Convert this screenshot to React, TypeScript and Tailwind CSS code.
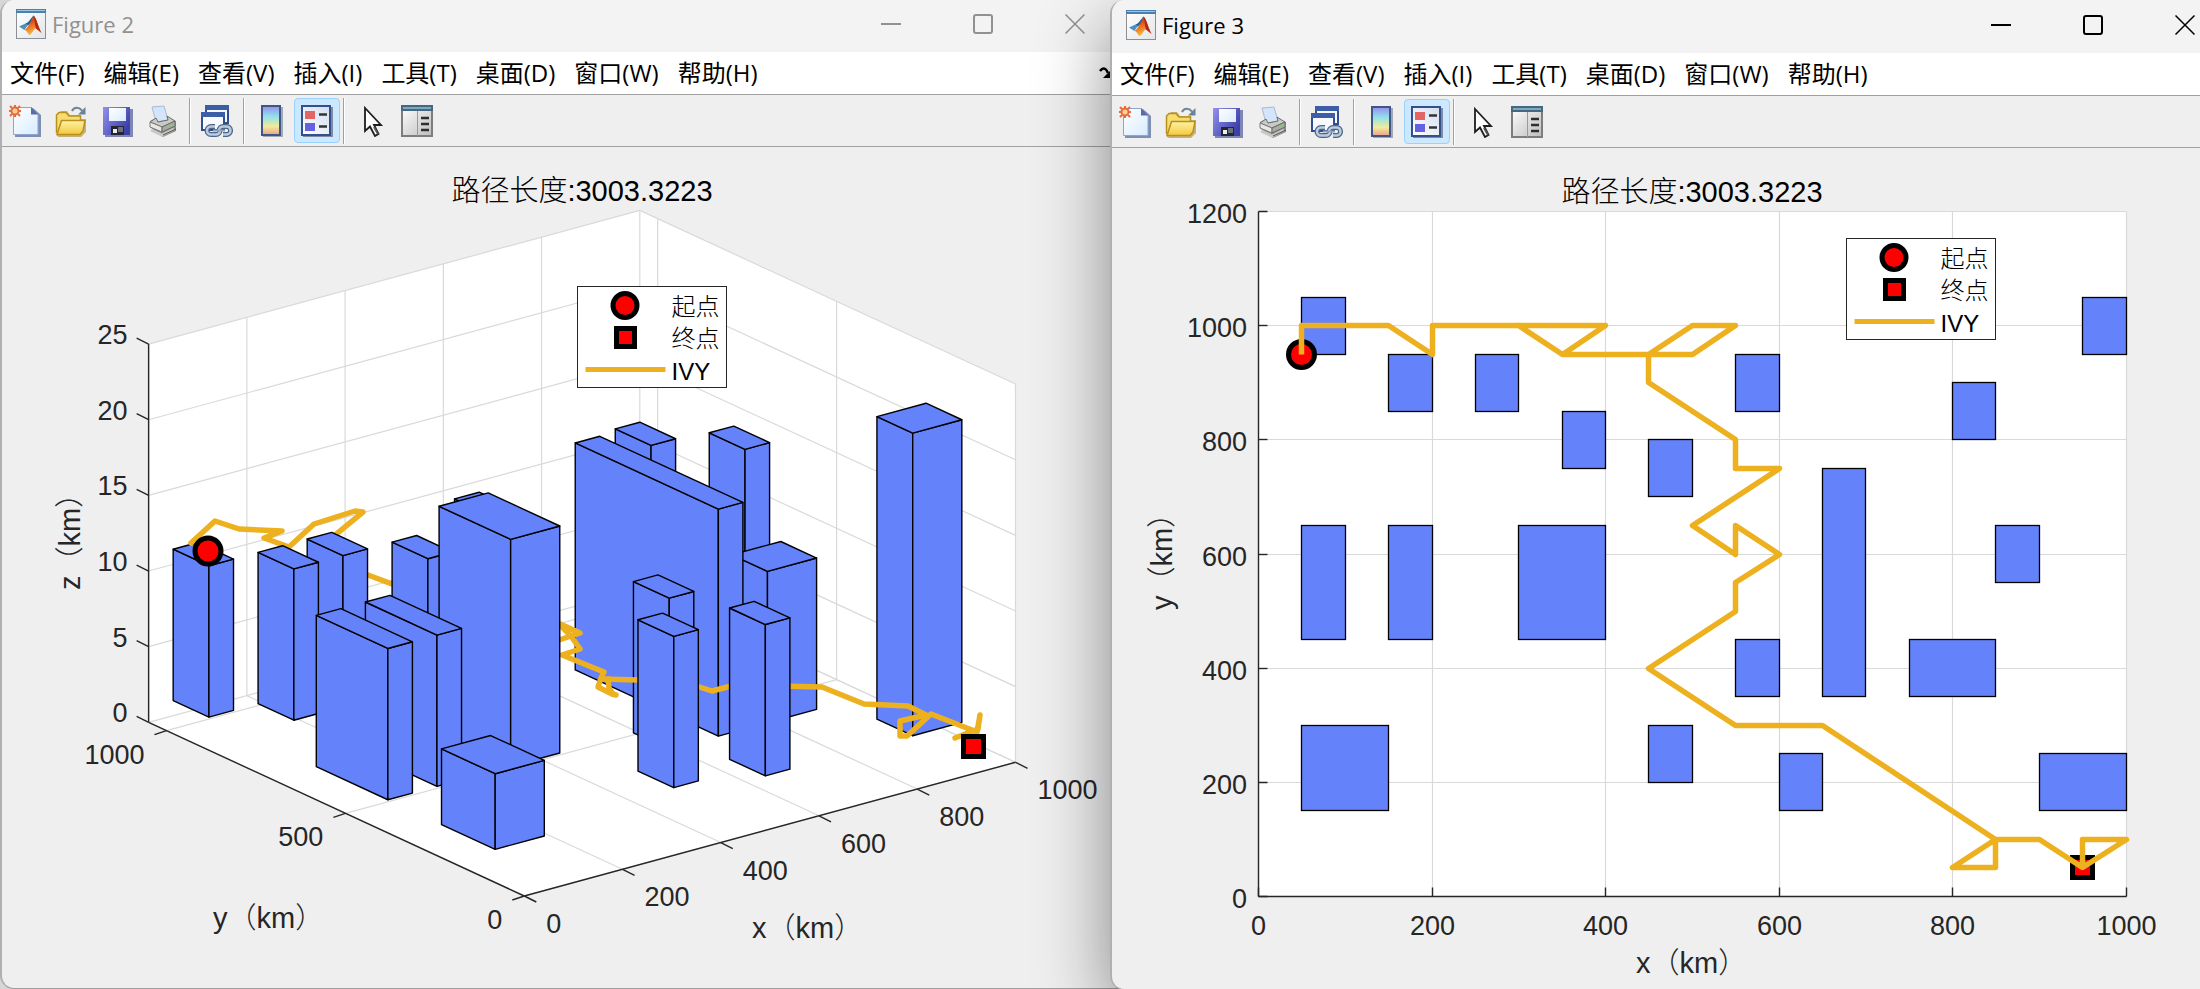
import type { ReactNode } from "react";
import clsx from "clsx";

type Point = [number, number];

interface Building {
  x: number;
  y: number;
  w: number;
  d: number;
  h: number;
}

const MENUS = ["文件(F)", "编辑(E)", "查看(V)", "插入(I)", "工具(T)", "桌面(D)", "窗口(W)", "帮助(H)"];

const BLUE = "#6482fa";
const GOLD = "#edb120";
const INK = "#262626";

// listed back to front, so that nearer blocks paint over farther ones
const FAR_BUILDINGS: Building[] = [
  { x: 950, y: 950, w: 50, d: 100, h: 10 },
  { x: 900, y: 150, w: 100, d: 100, h: 20 },
  { x: 850, y: 550, w: 50, d: 100, h: 15 },
  { x: 800, y: 800, w: 50, d: 100, h: 10 },
  { x: 750, y: 350, w: 100, d: 100, h: 10 },
  { x: 650, y: 350, w: 50, d: 400, h: 15 },
  { x: 550, y: 350, w: 50, d: 100, h: 10 },
  { x: 550, y: 850, w: 50, d: 100, h: 10 },
  { x: 450, y: 700, w: 50, d: 100, h: 10 },
  { x: 50, y: 950, w: 50, d: 100, h: 10 },
];

const NEAR_BUILDINGS: Building[] = [
  { x: 350, y: 750, w: 50, d: 100, h: 10 },
  { x: 250, y: 850, w: 50, d: 100, h: 10 },
  { x: 150, y: 850, w: 50, d: 100, h: 10 },
  { x: 600, y: 150, w: 50, d: 100, h: 10 },
  { x: 450, y: 200, w: 50, d: 100, h: 10 },
  { x: 300, y: 450, w: 100, d: 200, h: 15 },
  { x: 150, y: 450, w: 50, d: 200, h: 10 },
  { x: 50, y: 450, w: 50, d: 200, h: 10 },
  { x: 50, y: 150, w: 100, d: 150, h: 5 },
];

const ROUTE: Point[] = [
  [50, 950], [50, 1000], [150, 1000], [200, 950], [200, 1000], [400, 1000], [350, 950],
  [300, 1000], [350, 950], [450, 950], [500, 1000], [550, 1000], [500, 950], [450, 950],
  [450, 900], [550, 800], [550, 750], [600, 750], [500, 650], [550, 600], [550, 650],
  [600, 600], [550, 550], [550, 500], [450, 400], [550, 300], [650, 300], [850, 100],
  [800, 50], [850, 50], [850, 100], [900, 100], [950, 50], [1000, 100], [950, 100], [950, 50],
];

const ROUTE_3D = [
  "191,543 215,521 239,529 282,531 264,538 289,547 314,524 355,511 363,512 335,535 345,566 368,575 400,587",
  "550,643 580,633 558,623 571,636 580,649 562,655 604,672 601,678 598,687 612,694 616,695",
  "608,679 609,688 613,694",
  "602,679 638,680 665,681",
  "690,684 712,691 735,685",
  "780,686 822,687 864,704 908,706 926,715 900,721 900,736 907,736 931,714 977,732 980,715 978,729 955,738",
];

const line = "stroke-[#262626] stroke-[1.4px]";
const grid = "stroke-[#d9d9d9] stroke-[1.2px]";

const toPoints = (pts: Point[]) => pts.map((p) => p.join(",")).join(" ");

// ---------- icons ----------

function MatlabLogo() {
  return (
    <svg viewBox="0 0 30 30" className="size-[30px] shrink-0" aria-hidden="true">
      <rect x="0.5" y="0.5" width="29" height="29" fill="url(#logoBg)" stroke="#8a8f94" />
      <rect x="0" y="0" width="30" height="4" fill="#4a7fae" />
      <rect x="1" y="1" width="28" height="1" fill="#9fc6e6" />
      <path d="M3 17.5 L9.5 14.5 L12 16 C10 18 9.5 19.5 8.5 21 Z" fill="#4b8fc4" />
      <path d="M9.5 14.5 C13 13.5 15 9 17.5 6.5 L15.5 13 L12 16.5 Z" fill="#2c5f8f" />
      <path d="M17.5 6.5 C15.5 12 12.5 18 8.5 21 C11 21 12 25.5 13.5 26 C16 25.5 18 19 20 19.5 L25.5 24 C22 17 20 8 17.5 6.5 Z" fill="url(#logoFlame)" />
      <path d="M17.5 6.5 C19 11 18.5 16 20 19.5 L25.5 24 C22 17 20 8 17.5 6.5 Z" fill="#b3281b" />
    </svg>
  );
}

function NewIcon() {
  return (
    <svg viewBox="0 0 32 32" className="size-8" aria-hidden="true">
      <path d="M6 3 H24 L32 10 V32 H6 Z" fill="#7e8fb3" />
      <path d="M4.500 2.500 H22 L29 9 V29.500 H4.500 Z" fill="url(#paper)" stroke="#8fa5d0" />
      <path d="M22 2 L29.500 9.500 H22 Z" fill="#5a6ba8" />
      <g stroke="#e86a3c" strokeWidth="2">
        <path d="M6 0 V3 M6 9 V12 M0 6 H3 M9 6 H12 M1 1 L3 3 M9 9 L11 11 M11 1 L9 3 M1 11 L3 9" />
      </g>
      <circle cx="6" cy="6" r="3.500" fill="#fbd29a" stroke="#e86a3c" strokeWidth="2" />
    </svg>
  );
}

function OpenIcon() {
  return (
    <svg viewBox="0 0 32 32" className="size-8" aria-hidden="true">
      <path d="M2 31 V10 L6 6 H12 L15 10 H26 V14 H31 V27 L26 32 H4 Z" fill="#c9b07a" />
      <path d="M1.500 28 V10 L4 7.500 H11 L14 11 H25.500 V15" fill="#f7dc72" stroke="#b8901c" strokeWidth="1.500" />
      <path d="M2 29.500 L6.500 15.500 H30 L28 26 L25 29.500 Z" fill="url(#folder)" stroke="#b8901c" strokeWidth="1.500" />
      <path d="M17 6 C19 1.500 24 2 27 5.500" fill="none" stroke="#6f8598" strokeWidth="2" />
      <path d="M30.500 2 V9.500 H23 Z" fill="#6a8196" />
    </svg>
  );
}

function SaveIcon() {
  return (
    <svg viewBox="0 0 32 32" className="size-8" aria-hidden="true">
      <rect x="4" y="4" width="28" height="28" fill="#7d86b4" />
      <rect x="2" y="2" width="27" height="28" fill="url(#disk)" />
      <rect x="8" y="3" width="17" height="13" fill="url(#paper)" />
      <rect x="10" y="21" width="13" height="9" fill="#24252f" />
      <rect x="12" y="24" width="4" height="4" fill="#eceef4" />
      <rect x="17" y="22" width="5" height="5" fill="#6c6f7d" />
    </svg>
  );
}

function PrintIcon() {
  return (
    <svg viewBox="0 0 32 32" className="size-8" aria-hidden="true">
      <path d="M3 22 L3 16 L13 11 L29 16 V26 L16 32 Z" fill="#8d8d8b" />
      <path d="M5 2 L17 1 L21 15 L9 17 Z" fill="#d3e4fb" stroke="#a9b9d2" />
      <path d="M3 17 L9 13 L11 17 L21 15 L20 11 L28 16 L15 22 Z" fill="#c9c9c5" stroke="#6d6d6a" />
      <path d="M3 17 L15 22 V27 L3 22 Z" fill="#e8e8e5" stroke="#7b7b78" />
      <path d="M15 22 L28 16 V21 L15 27 Z" fill="#a9a9a6" stroke="#6d6d6a" />
      <path d="M4 25 L15 30 L27 24" fill="none" stroke="#c9c9c5" strokeWidth="3" />
      <path d="M16 30 L29 24" stroke="#555" />
      <rect x="22" y="20" width="3" height="2" fill="#7ed160" />
    </svg>
  );
}

function LinkIcon() {
  return (
    <svg viewBox="0 0 32 32" className="size-8" aria-hidden="true">
      <rect x="5" y="1" width="22" height="17" fill="#f7f9fd" stroke="#2f4f92" strokeWidth="2" />
      <rect x="4" y="0" width="24" height="5" fill="#3c5ea6" />
      <rect x="1" y="8" width="22" height="17" fill="#f7f9fd" stroke="#2f4f92" strokeWidth="2" />
      <rect x="0" y="7" width="24" height="5" fill="#3c5ea6" />
      <path d="M14 21.500 h-4 a4 4 0 0 0 0 8 h5 a4 4 0 0 0 4 -4 M18 25.500 a4 4 0 0 1 4 -4 h3 a4 4 0 0 1 1 8 h-4" fill="none" stroke="#4e6687" strokeWidth="5" />
      <path d="M14 21.500 h-4 a4 4 0 0 0 0 8 h5 a4 4 0 0 0 4 -4 M18 25.500 a4 4 0 0 1 4 -4 h3 a4 4 0 0 1 1 8 h-4" fill="none" stroke="#bccbdd" strokeWidth="2.500" />
      <path d="M12 25.500 H24" stroke="#8fa5c0" strokeWidth="2" />
    </svg>
  );
}

function ColorbarIcon() {
  return (
    <svg viewBox="0 0 32 32" className="size-8" aria-hidden="true">
      <rect x="8" y="2" width="20" height="30" fill="#a3a8b5" />
      <rect x="7" y="1" width="18" height="29" fill="url(#spectrum)" stroke="#3f5687" strokeWidth="2" />
    </svg>
  );
}

function LegendIcon() {
  return (
    <svg viewBox="0 0 32 32" className="size-8" aria-hidden="true">
      <rect x="2" y="2" width="30" height="30" fill="#7f8ba5" />
      <rect x="1" y="1" width="28" height="29" fill="url(#panel)" stroke="#34508c" strokeWidth="2" />
      <rect x="4" y="6" width="10" height="8" fill="#e36464" />
      <rect x="4" y="18" width="10" height="8" fill="#6461e3" />
      <path d="M18 9.500 H26 M18 21.500 H26" stroke="#333" strokeWidth="2.500" />
    </svg>
  );
}

function CursorIcon() {
  return (
    <svg viewBox="0 0 32 32" className="size-8" aria-hidden="true">
      <path d="M10 3 V26 L15 21.500 L20 31 L23.500 29 L19 20 H26 Z" fill="#fff" stroke="#1d1d1d" strokeWidth="1.800" />
      <path d="M19 22 L23 29" stroke="#555" strokeWidth="2" />
    </svg>
  );
}

function PropertyIcon() {
  return (
    <svg viewBox="0 0 32 32" className="size-8" aria-hidden="true">
      <rect x="1" y="1" width="30" height="30" fill="url(#panelGray)" stroke="#7d7d7d" strokeWidth="2" />
      <rect x="0" y="0" width="32" height="6" fill="#44687f" />
      <rect x="2" y="2" width="28" height="2" fill="#7fa7c0" />
      <path d="M16.500 6 V31" stroke="#9a9a9a" />
      <path d="M20 13 H28 M20 19 H28 M20 25 H28" stroke="#2e2e2e" strokeWidth="2.500" />
    </svg>
  );
}

function SharedGradients() {
  return (
    <svg className="absolute size-0" aria-hidden="true">
      <defs>
        <linearGradient id="logoBg" x1="0" y1="0" x2="1" y2="1">
          <stop offset="0" stopColor="#ffffff" />
          <stop offset="1" stopColor="#e2e5e8" />
        </linearGradient>
        <linearGradient id="logoFlame" x1="0" y1="0" x2="0.300" y2="1">
          <stop offset="0" stopColor="#8c2a1c" />
          <stop offset="0.500" stopColor="#e5601c" />
          <stop offset="1" stopColor="#f9bd3a" />
        </linearGradient>
        <linearGradient id="paper" x1="0" y1="0" x2="1" y2="1">
          <stop offset="0" stopColor="#ffffff" />
          <stop offset="1" stopColor="#d8ecff" />
        </linearGradient>
        <linearGradient id="folder" x1="0" y1="0" x2="0" y2="1">
          <stop offset="0" stopColor="#fff2a4" />
          <stop offset="1" stopColor="#f3c93e" />
        </linearGradient>
        <linearGradient id="disk" x1="0" y1="0" x2="1" y2="0.600">
          <stop offset="0" stopColor="#9291ee" />
          <stop offset="1" stopColor="#3c3fa6" />
        </linearGradient>
        <linearGradient id="spectrum" x1="0" y1="0" x2="0" y2="1">
          <stop offset="0" stopColor="#9a8ce8" />
          <stop offset="0.350" stopColor="#8fe0ee" />
          <stop offset="0.700" stopColor="#f0ec9a" />
          <stop offset="1" stopColor="#eda08c" />
        </linearGradient>
        <linearGradient id="panel" x1="1" y1="0" x2="0" y2="1">
          <stop offset="0" stopColor="#d3ddf0" />
          <stop offset="1" stopColor="#ffffff" />
        </linearGradient>
        <linearGradient id="panelGray" x1="0" y1="0" x2="1" y2="1">
          <stop offset="0" stopColor="#ffffff" />
          <stop offset="1" stopColor="#bdbdbd" />
        </linearGradient>
      </defs>
    </svg>
  );
}

// ---------- window chrome ----------

function ToolButton({ label, active = false, children }: { label: string; active?: boolean; children: ReactNode }) {
  return (
    <button
      type="button"
      aria-label={label}
      aria-pressed={active}
      className={clsx(
        "flex h-[45px] w-[46px] shrink-0 items-center justify-center rounded border",
        active ? "border-[#99d1ff] bg-[#cce8ff]" : "border-transparent"
      )}
    >
      {children}
    </button>
  );
}

function Separator() {
  return <div className="mx-[3px] h-[46px] w-[2px] shrink-0 border-r border-white bg-[#a0a0a0]" />;
}

function Toolbar() {
  return (
    <div role="toolbar" className="flex h-[52px] items-center border-b border-[#a0a0a0]">
      <ToolButton label="新建图窗"><NewIcon /></ToolButton>
      <ToolButton label="打开文件"><OpenIcon /></ToolButton>
      <ToolButton label="保存图窗"><SaveIcon /></ToolButton>
      <ToolButton label="打印图窗"><PrintIcon /></ToolButton>
      <Separator />
      <ToolButton label="链接绘图"><LinkIcon /></ToolButton>
      <Separator />
      <ToolButton label="插入颜色栏"><ColorbarIcon /></ToolButton>
      <ToolButton label="插入图例" active><LegendIcon /></ToolButton>
      <Separator />
      <ToolButton label="编辑绘图"><CursorIcon /></ToolButton>
      <ToolButton label="打开属性检查器"><PropertyIcon /></ToolButton>
    </div>
  );
}

function WindowControls() {
  const button = "flex h-8 w-[92px] items-center justify-center";
  return (
    <div className="ml-auto flex">
      <button type="button" aria-label="最小化" className={button}>
        <svg viewBox="0 0 20 20" className="size-5" fill="none" stroke="currentColor" strokeWidth="2">
          <path d="M0 10 H20" />
        </svg>
      </button>
      <button type="button" aria-label="最大化" className={button}>
        <svg viewBox="0 0 20 20" className="size-5" fill="none" stroke="currentColor" strokeWidth="2">
          <rect x="1" y="1" width="18" height="18" rx="2" />
        </svg>
      </button>
      <button type="button" aria-label="关闭" className={button}>
        <svg viewBox="0 0 20 20" className="size-5" fill="none" stroke="currentColor" strokeWidth="1.500">
          <path d="M0.500 0.500 L19.500 19.500 M19.500 0.500 L0.500 19.500" />
        </svg>
      </button>
    </div>
  );
}

interface FigureWindowProps {
  title: string;
  focused?: boolean;
  className: string;
  children: ReactNode;
}

function FigureWindow({ title, focused = false, className, children }: FigureWindowProps) {
  return (
    <section
      className={clsx(
        "overflow-hidden rounded-l-[14px] border-b border-l-2 border-b-[#a0a0a0] border-l-[#b0b0b0] bg-[#efefef]",
        className
      )}
    >
      <header
        className={clsx(
          "flex items-center gap-[6px] bg-[#f3f3f3] pb-1 pl-[14px]",
          focused ? "h-[53px] text-black" : "h-[52px] text-[#919191]"
        )}
      >
        <MatlabLogo />
        <h1 className="font-['Open_Sans','Noto_Sans_CJK_SC',sans-serif] text-[22px] leading-8">{title}</h1>
        <WindowControls />
      </header>
      <nav className="flex h-[43px] items-center gap-[19px] border-b border-[#a0a0a0] bg-white pl-2 font-['Open_Sans','Noto_Sans_CJK_SC',sans-serif] text-2xl text-black">
        {MENUS.map((menu) => (
          <button key={menu} type="button" className="whitespace-nowrap leading-8">
            {menu}
          </button>
        ))}
        {!focused && (
          <svg viewBox="0 0 20 12" className="mr-[2px] ml-auto h-3 w-5" aria-hidden="true">
            <path d="M1 4 C4 0 7 1 9 6" fill="none" stroke="#000" strokeWidth="2.500" />
            <path d="M13 2 V11 H4 Z" fill="#000" />
          </svg>
        )}
      </nav>
      <Toolbar />
      {children}
    </section>
  );
}

// ---------- plots ----------

function StartMarker({ x, y, r = 13 }: { x: number; y: number; r?: number }) {
  return <circle cx={x} cy={y} r={r} fill="#f00" stroke="#000" strokeWidth="5" />;
}

function EndMarker({ x, y, size = 20 }: { x: number; y: number; size?: number }) {
  return <rect x={x - size / 2} y={y - size / 2} width={size} height={size} fill="#f00" stroke="#000" strokeWidth="5" />;
}

function Legend({ x, y }: { x: number; y: number }) {
  return (
    <g transform={`translate(${x} ${y})`}>
      <rect width="149" height="101" fill="#fff" stroke={INK} />
      <StartMarker x={47.5} y={19} r={12} />
      <EndMarker x={48} y={51} size={18} />
      <path d="M8 83 H88" stroke={GOLD} strokeWidth="5" />
      <g className="fill-black text-2xl font-light">
        <text x="94" y="28">起点</text>
        <text x="94" y="60">终点</text>
      </g>
      <text x="94" y="93" className="fill-black text-2xl">IVY</text>
    </g>
  );
}

function PlotTitle({ y }: { y: number }) {
  return (
    <text x="582" y={y} textAnchor="middle" className="fill-black text-[29px]">
      <tspan className="font-light">路径长度</tspan>:3003.3223
    </text>
  );
}

function AxisLabel({ name, transform }: { name: string; transform: string }) {
  return (
    <text transform={transform} className="text-[29px]">
      {name}
      <tspan className="font-light">（</tspan>km<tspan className="font-light">）</tspan>
    </text>
  );
}

const plotClasses =
  "block h-auto w-full fill-[#262626] font-['Liberation_Sans','Noto_Sans_CJK_SC',sans-serif] text-[27px]";

function project(x: number, y: number, z = 0): Point {
  return [524.3 + 0.4912 * x - 0.3578 * y, 896 - 0.1337 * x - 0.1654 * y - 15.13 * z];
}

function Block({ x, y, w, d, h }: Building) {
  // every block floats one unit above the floor
  const lo = 1;
  const hi = 1 + h;
  const faces: Point[][] = [
    [project(x, y, lo), project(x, y + d, lo), project(x, y + d, hi), project(x, y, hi)],
    [project(x, y, lo), project(x + w, y, lo), project(x + w, y, hi), project(x, y, hi)],
    [project(x, y, hi), project(x + w, y, hi), project(x + w, y + d, hi), project(x, y + d, hi)],
  ];
  return (
    <g fill={BLUE} stroke="#000" strokeWidth="1.400" strokeLinejoin="round">
      {faces.map((face, i) => (
        <polygon key={i} points={toPoints(face)} />
      ))}
    </g>
  );
}

function Segment({ from, to, className }: { from: Point; to: Point; className: string }) {
  return <line x1={from[0]} y1={from[1]} x2={to[0]} y2={to[1]} className={className} />;
}

function Plot3D() {
  const xs = [0, 200, 400, 600, 800, 1000];
  const ys = [0, 500, 1000];
  const zs = [0, 5, 10, 15, 20, 25];
  const far = 1050;
  const outline: Point[] = [
    project(0, 0),
    project(1000, 0),
    project(1000, 0, 25),
    project(1000, far, 25),
    project(0, far, 25),
    project(0, far),
  ];

  return (
    <svg viewBox="2 147 1119 841" className={plotClasses} role="img" aria-label="三维路径图">
      <polygon points={toPoints(outline)} fill="#fff" />
      {xs.map((x) => (
        <g key={x}>
          <Segment from={project(x, 0)} to={project(x, far)} className={grid} />
          <Segment from={project(x, far)} to={project(x, far, 25)} className={grid} />
        </g>
      ))}
      {ys.map((y) => (
        <g key={y}>
          <Segment from={project(0, y)} to={project(1000, y)} className={grid} />
          <Segment from={project(1000, y)} to={project(1000, y, 25)} className={grid} />
        </g>
      ))}
      {zs.map((z) => (
        <g key={z}>
          <Segment from={project(0, far, z)} to={project(1000, far, z)} className={grid} />
          <Segment from={project(1000, far, z)} to={project(1000, 0, z)} className={grid} />
        </g>
      ))}

      <Segment from={project(0, 0)} to={project(1000, 0)} className={line} />
      <Segment from={project(0, 0)} to={project(0, far)} className={line} />
      <Segment from={project(0, far)} to={project(0, far, 25)} className={line} />
      {xs.map((x) => {
        const [px, py] = project(x, 0);
        return (
          <g key={x}>
            <Segment from={[px, py]} to={[px + 12, py + 6]} className={line} />
            <text x={px + 22} y={py + 37}>{x}</text>
          </g>
        );
      })}
      {ys.map((y) => {
        const [px, py] = project(0, y);
        return (
          <g key={y}>
            <Segment from={[px, py]} to={[px - 12, py + 4]} className={line} />
            <text x={px - 22} y={py + 33} textAnchor="end">{y}</text>
          </g>
        );
      })}
      {zs.map((z) => {
        const [px, py] = project(0, far, z);
        return (
          <g key={z}>
            <Segment from={[px, py]} to={[px - 12, py - 6]} className={line} />
            <text x={px - 21} y={py} textAnchor="end">{z}</text>
          </g>
        );
      })}

      {FAR_BUILDINGS.map((b) => (
        <Block key={`${b.x}-${b.y}`} {...b} />
      ))}
      {ROUTE_3D.map((points) => (
        <polyline key={points} points={points} fill="none" stroke={GOLD} strokeWidth="5.500" strokeLinejoin="round" strokeLinecap="round" />
      ))}
      {NEAR_BUILDINGS.map((b) => (
        <Block key={`${b.x}-${b.y}`} {...b} />
      ))}
      <StartMarker x={208} y={551} />
      <EndMarker x={973.5} y={746.5} />

      <PlotTitle y={201} />
      <AxisLabel name="x" transform="translate(752 938)" />
      <AxisLabel name="y" transform="translate(213 928)" />
      <AxisLabel name="z" transform="translate(80 590) rotate(-90)" />
      <Legend x={577.5} y={286.5} />
    </svg>
  );
}

function Plot2D() {
  const xs = [0, 200, 400, 600, 800, 1000];
  const ys = [0, 200, 400, 600, 800, 1000, 1200];
  // snapped to pixel centres to keep the upright strokes sharp
  const px = (x: number) => Math.round(148 + 0.8675 * x) + 0.5;
  const py = (y: number) => Math.round(896 - 0.5708 * y) + 0.5;
  const buildings = [...FAR_BUILDINGS, ...NEAR_BUILDINGS];
  const route = ROUTE.map(([x, y]): Point => [px(x), py(y)]);

  return (
    <svg viewBox="2 148 1119 841" className={plotClasses} role="img" aria-label="二维路径图">
      <rect x={px(0)} y={py(1200)} width={px(1000) - px(0)} height={py(0) - py(1200)} fill="#fff" />
      {xs.map((x) => (
        <Segment key={x} from={[px(x), py(0)]} to={[px(x), py(1200)]} className={grid} />
      ))}
      {ys.map((y) => (
        <Segment key={y} from={[px(0), py(y)]} to={[px(1000), py(y)]} className={grid} />
      ))}
      <Segment from={[px(0), py(0)]} to={[px(1000), py(0)]} className={line} />
      <Segment from={[px(0), py(0)]} to={[px(0), py(1200)]} className={line} />
      {xs.map((x) => (
        <g key={x}>
          <Segment from={[px(x), py(0)]} to={[px(x), py(0) - 9]} className={line} />
          <text x={px(x)} y={935} textAnchor="middle">{x}</text>
        </g>
      ))}
      {ys.map((y) => (
        <g key={y}>
          <Segment from={[px(0), py(y)]} to={[px(0) + 9, py(y)]} className={line} />
          <text x={137} y={py(y) + 11} textAnchor="end">{y}</text>
        </g>
      ))}

      {buildings.map((b) => (
        <rect
          key={`${b.x}-${b.y}`}
          x={px(b.x)}
          y={py(b.y + b.d)}
          width={px(b.x + b.w) - px(b.x)}
          height={py(b.y) - py(b.y + b.d)}
          fill={BLUE}
          stroke="#000"
          strokeWidth="1.300"
        />
      ))}
      <StartMarker x={px(50)} y={py(950)} />
      <EndMarker x={px(950)} y={py(50)} />
      <polyline points={toPoints(route)} fill="none" stroke={GOLD} strokeWidth="5.500" strokeLinejoin="round" strokeLinecap="butt" />

      <PlotTitle y={202} />
      <AxisLabel name="x" transform="translate(526 973)" />
      <AxisLabel name="y" transform="translate(62 610) rotate(-90)" />
      <Legend x={736.5} y={238.5} />
    </svg>
  );
}

export default function App() {
  return (
    <main className="grid min-h-screen grid-cols-[1110fr_1090fr] items-start overflow-hidden bg-[#d6d6d6]">
      <SharedGradients />
      <FigureWindow title="Figure 2" className="-mr-[11px]">
        <Plot3D />
      </FigureWindow>
      <FigureWindow title="Figure 3" focused className="relative -mr-[31px] shadow-[0_24px_72px_rgba(0,0,0,0.44)]">
        <Plot2D />
      </FigureWindow>
    </main>
  );
}
